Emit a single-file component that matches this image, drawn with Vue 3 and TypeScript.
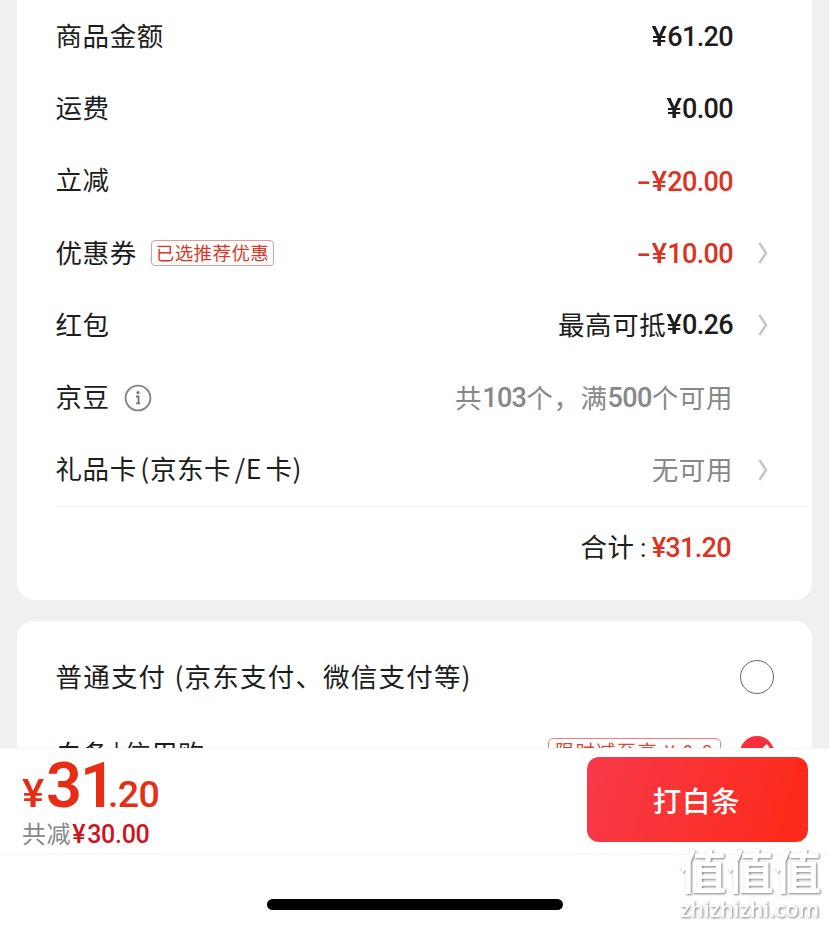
<script setup lang="ts">
interface Part {
  text: string
  num?: boolean
}
interface Row {
  label: string
  tag?: string
  info?: boolean
  gift?: boolean
  value: Part[]
  tone: 'dark' | 'red' | 'gray'
  arrow?: boolean
}

const rows: Row[] = [
  { label: '商品金额', value: [{ text: '¥61.20', num: true }], tone: 'dark' },
  { label: '运费', value: [{ text: '¥0.00', num: true }], tone: 'dark' },
  { label: '立减', value: [{ text: '-¥20.00', num: true }], tone: 'red' },
  { label: '优惠券', tag: '已选推荐优惠', value: [{ text: '-¥10.00', num: true }], tone: 'red', arrow: true },
  { label: '红包', value: [{ text: '最高可抵' }, { text: '¥0.26', num: true }], tone: 'dark', arrow: true },
  {
    label: '京豆',
    info: true,
    value: [{ text: '共' }, { text: '103', num: true }, { text: '个，满' }, { text: '500', num: true }, { text: '个可用' }],
    tone: 'gray',
  },
  { label: '礼品卡 (京东卡 /E 卡)', gift: true, value: [{ text: '无可用' }], tone: 'gray', arrow: true },
]

// Splits an amount into sign, currency mark and digits so each can be spaced separately.
function pieces(text: string): { text: string; kind: string }[] {
  return (text.match(/-|¥|[\d.]+|[^-¥\d.]+/g) ?? []).map((t) => ({
    text: t,
    kind: t === '-' ? 'minus' : t === '¥' ? 'mark' : 'plain',
  }))
}
</script>

<template>
  <main class="page">
    <section class="card summary">
      <div v-for="row in rows" :key="row.label" class="row">
        <span class="label" :class="{ gift: row.gift }">{{ row.label }}</span>
        <span v-if="row.tag" class="tag">{{ row.tag }}</span>
        <svg v-if="row.info" class="info" viewBox="0 0 28 28">
          <circle cx="14" cy="14" r="12.4" fill="none" stroke="#858585" stroke-width="1.9" />
          <circle cx="14" cy="8.6" r="1.6" fill="#777" />
          <path d="M12 12.5H14.5V19.3M12 19.3H16.2" fill="none" stroke="#777" stroke-width="1.8" />
        </svg>
        <span class="value" :class="row.tone">
          <span v-for="(part, i) in row.value" :key="i" :class="part.num ? 'num' : 'han'"
            ><span v-for="(p, j) in pieces(part.text)" :key="j" :class="p.kind">{{ p.text }}</span></span
          >
        </span>
        <span class="arrow">
          <svg v-if="row.arrow" viewBox="0 0 12 24" width="12" height="24">
            <path d="M2.4 2L9 12L2.4 22" fill="none" stroke="#c6c6c6" stroke-width="2.6" />
          </svg>
        </span>
      </div>
      <div class="total">
        <span class="total-label">合计</span><span class="colon">:</span><span class="num red">¥31.20</span>
      </div>
    </section>

    <section class="card pay">
      <div class="pay-row">
        <span class="label wide">普通支付 (京东支付、微信支付等)</span>
        <span class="radio"></span>
      </div>
      <div class="pay-row second">
        <span class="label credit">白条 | 信用购</span>
        <span class="promo">限时减至高 ¥ 0.8</span>
        <svg class="checked" viewBox="0 0 34 34">
          <circle cx="17" cy="17" r="17" fill="#f5303a" />
          <path d="M9 17.5L15 22L28 9.5" fill="none" stroke="#fff" stroke-width="4" />
        </svg>
      </div>
    </section>

    <footer class="bar">
      <div class="sum">
        <div class="price"><span class="yen">¥</span><span class="big">31</span><span class="small">.20</span></div>
        <div class="saved">共减<span class="saved-num"><span class="saved-mark">¥</span>30.00</span></div>
      </div>
      <button class="submit">打白条</button>
    </footer>

    <div class="home"><span class="indicator"></span></div>

    <svg class="watermark" viewBox="0 0 149 79">
      <text class="zh" x="-1" y="41" textLength="142" lengthAdjust="spacingAndGlyphs">值值值</text>
      <text class="domain" x="0" y="69" textLength="139" lengthAdjust="spacingAndGlyphs">zhizhizhi.com</text>
    </svg>
  </main>
</template>

<style>
body {
  margin: 0;
  background: #f0f0f0;
}
</style>

<style scoped>
.page {
  position: relative;
  width: 829px;
  height: 927px;
  overflow: hidden;
  display: flex;
  flex-direction: column;
  background: #f0f0f0;
  color: #1d1d1d;
  font-family: Roboto, 'Noto Sans CJK SC', sans-serif;
  font-size: 26.5px;
}
.card {
  margin: 0 17px;
  box-sizing: border-box;
  background: #fff;
  flex: none;
}
.summary {
  height: 600px;
  border-radius: 0 0 17px 17px;
}
.row {
  display: flex;
  align-items: center;
  height: 72.3px;
  padding: 0 43px 0 38.5px;
}
.label,
.value {
  font-family: 'Noto Sans CJK SC', sans-serif;
  letter-spacing: 0.6px;
  line-height: 40px;
  white-space: pre;
}
.label,
.han {
  padding-bottom: 3px;
}
.gift {
  letter-spacing: 0.6px;
  word-spacing: -3px;
}
.wide {
  letter-spacing: 0.9px;
  word-spacing: 1px;
}
.credit {
  word-spacing: -3px;
  letter-spacing: 0.5px;
  padding-bottom: 0;
}
.pay-row .wide {
  letter-spacing: 1.2px;
  padding-bottom: 2px;
}
.value {
  margin-left: auto;
  display: flex;
}
.han {
  margin-top: 1px;
}
.num {
  font-family: Roboto, sans-serif;
  font-weight: 500;
  font-size: 27px;
  letter-spacing: -0.65px;
  padding-top: 2px;
}
.mark {
  display: inline-block;
  margin: 0 1.5px 0 0.5px;
  transform: scaleX(1.08);
}
.minus {
  display: inline-block;
  margin-right: 4px;
  transform: scaleX(1.55);
}
.red {
  color: #dc3322;
}
.gray {
  color: #888;
}
.arrow {
  display: flex;
  width: 12px;
  margin-left: 24px;
}
.tag {
  box-sizing: border-box;
  height: 26px;
  margin: 0 0 1px 14px;
  padding: 0 4px;
  border: 1px solid #e59a93;
  border-radius: 4px;
  color: #d83a28;
  font: 18.5px/22px 'Noto Sans CJK SC', sans-serif;
  letter-spacing: 0.4px;
}
.info {
  width: 28px;
  height: 28px;
  margin-left: 14px;
}
.total {
  display: flex;
  align-items: center;
  justify-content: flex-end;
  height: 80px;
  margin-left: 39px;
  padding-right: 81px;
  border-top: 1px solid #f5f5f5;
}
.total-label {
  font-family: 'Noto Sans CJK SC', sans-serif;
  letter-spacing: 0.6px;
  padding-bottom: 3px;
}
.colon {
  width: 17px;
  text-align: center;
}
.pay {
  height: 127px;
  margin-top: 21px;
  border-radius: 17px 17px 0 0;
  overflow: hidden;
}
.pay-row {
  display: flex;
  align-items: center;
  height: 77px;
  padding: 17px 38px 0 38.5px;
}
.pay-row.second {
  padding-top: 0;
  margin-top: -1px;
}
.radio {
  box-sizing: border-box;
  width: 34px;
  height: 34px;
  margin-left: auto;
  border: 1px solid #666;
  border-radius: 50%;
}
.promo {
  box-sizing: border-box;
  width: 173px;
  height: 30px;
  margin-left: auto;
  border: 1.5px solid #ee8080;
  border-radius: 5px;
  text-align: center;
  white-space: nowrap;
  color: #d04a38;
  font: 19px/23px 'Noto Sans CJK SC', sans-serif;
  letter-spacing: 1.7px;
}
.checked {
  width: 34px;
  height: 34px;
  margin-left: 19px;
}
.bar {
  display: flex;
  flex: none;
  box-sizing: border-box;
  height: 107px;
  padding: 8px 21px 0 22px;
  justify-content: space-between;
  background: #fff;
  border-top: 1px solid #f5f5f5;
  border-bottom: 1px solid #f3f3f3;
}
.price {
  display: flex;
  align-items: baseline;
  height: 60px;
  line-height: 58px;
  color: #e62e17;
  font-weight: 500;
}
.yen {
  width: 24px;
  font-size: 38px;
  transform: scaleX(1.1);
  transform-origin: left;
}
.big {
  width: 62px;
  font-size: 63px;
  font-weight: 600;
  letter-spacing: -2px;
}
.small {
  font-size: 37.5px;
  letter-spacing: -0.6px;
}
.saved {
  height: 32px;
  color: #888;
  font: 24px/32px 'Noto Sans CJK SC', sans-serif;
  letter-spacing: 0.6px;
}
.saved-num {
  color: #ce1422;
  font: 500 25px/32px Roboto, sans-serif;
  letter-spacing: -0.3px;
}
.saved-mark {
  margin: 0 2px 0 1px;
}
.submit {
  width: 221px;
  height: 85px;
  padding: 0 2px 0 0;
  border: 0;
  border-radius: 12px;
  background: linear-gradient(105deg, #f83a4b, #fb2a1b 90%);
  color: #fff;
  font: 500 28.5px/82px 'Noto Sans CJK SC', sans-serif;
  letter-spacing: 0.7px;
}
.home {
  display: flex;
  flex: 1;
  align-items: flex-start;
  justify-content: center;
  padding-top: 44px;
  background: #fff;
}
.indicator {
  width: 296px;
  height: 11px;
  border-radius: 6px;
  background: #000;
}
.watermark {
  position: absolute;
  right: 0;
  bottom: 0;
  width: 149px;
  height: 79px;
  fill: #fff;
  filter: drop-shadow(1.5px 1.5px 1px rgba(0, 0, 0, 0.5));
}
.zh {
  font: 700 47px 'Noto Sans CJK SC', sans-serif;
}
.domain {
  font: 600 22px 'Open Sans', sans-serif;
}
</style>
